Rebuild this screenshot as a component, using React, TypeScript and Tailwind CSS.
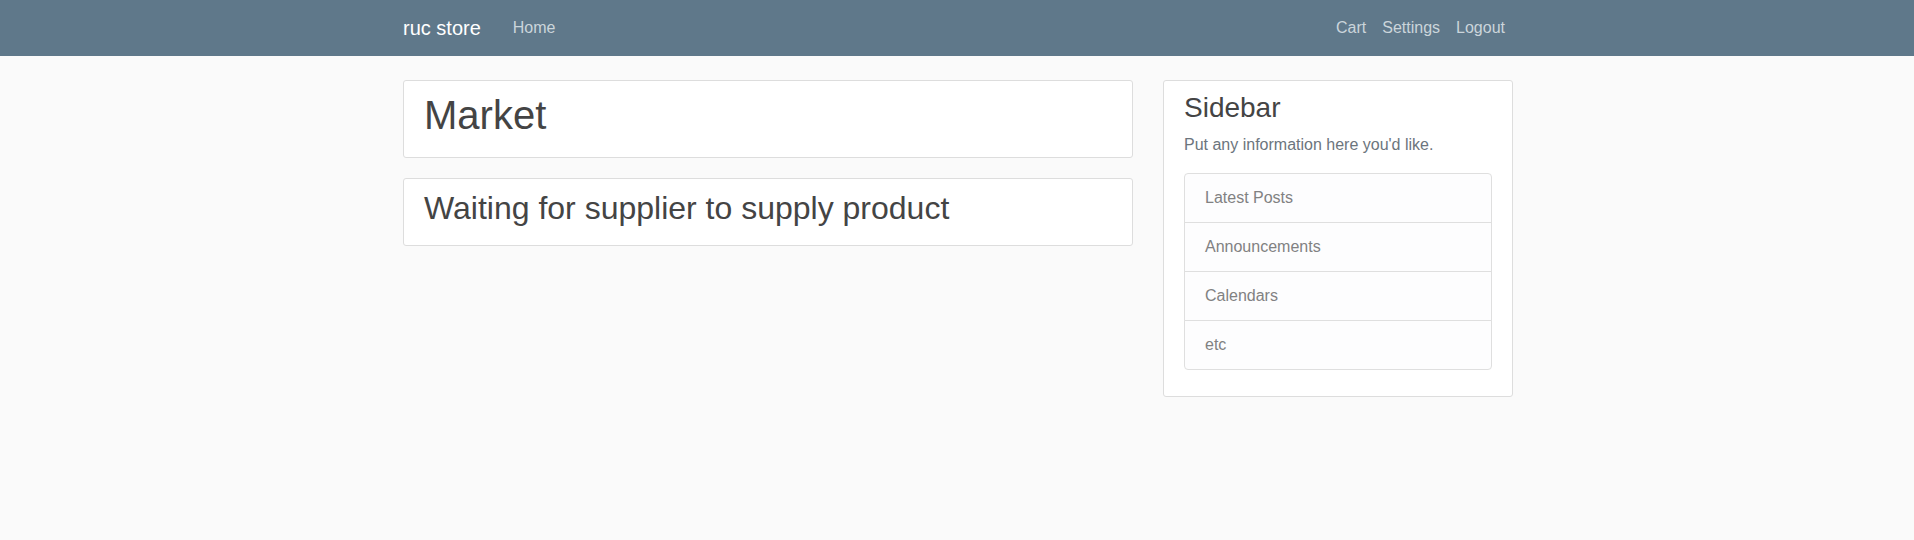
const navLinks = ['Cart', 'Settings', 'Logout'];
const sideLinks = ['Latest Posts', 'Announcements', 'Calendars', 'etc'];

function Navbar() {
  return (
    <header className="fixed top-0 left-0 right-0 z-10 bg-[#5f788a] pl-[2px]">
      <nav className="max-w-[1140px] mx-auto px-[15px] py-2 flex items-center">
        <a className="text-white text-[20px] leading-[30px] py-[5px] mr-6 whitespace-nowrap">ruc store</a>
        <div className="flex flex-1 items-center">
          <a className="px-2 py-2 leading-6 text-[#cbd5db]">Home</a>
        </div>
        <div className="flex items-center">
          {navLinks.map((link) => (
            <a key={link} className="px-2 py-2 leading-6 text-[#cbd5db]">{link}</a>
          ))}
        </div>
      </nav>
    </header>
  );
}

export default function App() {
  return (
    <div className="min-h-screen bg-[#fafafa] text-[#333333] text-base leading-6 font-['Liberation_Sans',Arial,sans-serif] pt-20 pl-[2px]">
      <Navbar />

      <main className="max-w-[1140px] mx-auto px-[15px]">
        <div className="flex gap-[30px] items-start">
          {/* Main column */}
          <div className="w-[730px] shrink-0">
            <div className="bg-white border border-[#dddddd] rounded-[3px] px-5 py-[10px] mb-5">
              <h1 className="text-[40px] leading-[1.2] mb-2 text-[#444444]">Market</h1>
            </div>
            <div className="bg-white border border-[#dddddd] rounded-[3px] px-5 py-[10px] mb-5">
              <h2 className="text-[32px] leading-[1.2] mb-2 text-[#444444]">Waiting for supplier to supply product</h2>
            </div>
          </div>

          {/* Sidebar */}
          <div className="w-[350px] shrink-0">
            <div className="bg-white border border-[#dddddd] rounded-[3px] px-5 py-[10px] mb-5">
              <h3 className="text-[28px] leading-[1.2] mb-2 text-[#444444]">Sidebar</h3>
              <p className="text-[#6c757d] mb-4">
                Put any information here you'd like.
              </p>
              <ul className="mb-4 flex flex-col">
                {sideLinks.map((item, i) => (
                  <li
                    key={item}
                    className={
                      'px-5 py-3 bg-[#fdfdfe] text-[#818182] border border-[#dfdfdf] ' +
                      (i === 0 ? 'rounded-t ' : '-mt-px ') +
                      (i === sideLinks.length - 1 ? 'rounded-b' : '')
                    }
                  >
                    {item}
                  </li>
                ))}
              </ul>
            </div>
          </div>
        </div>
      </main>
    </div>
  );
}
